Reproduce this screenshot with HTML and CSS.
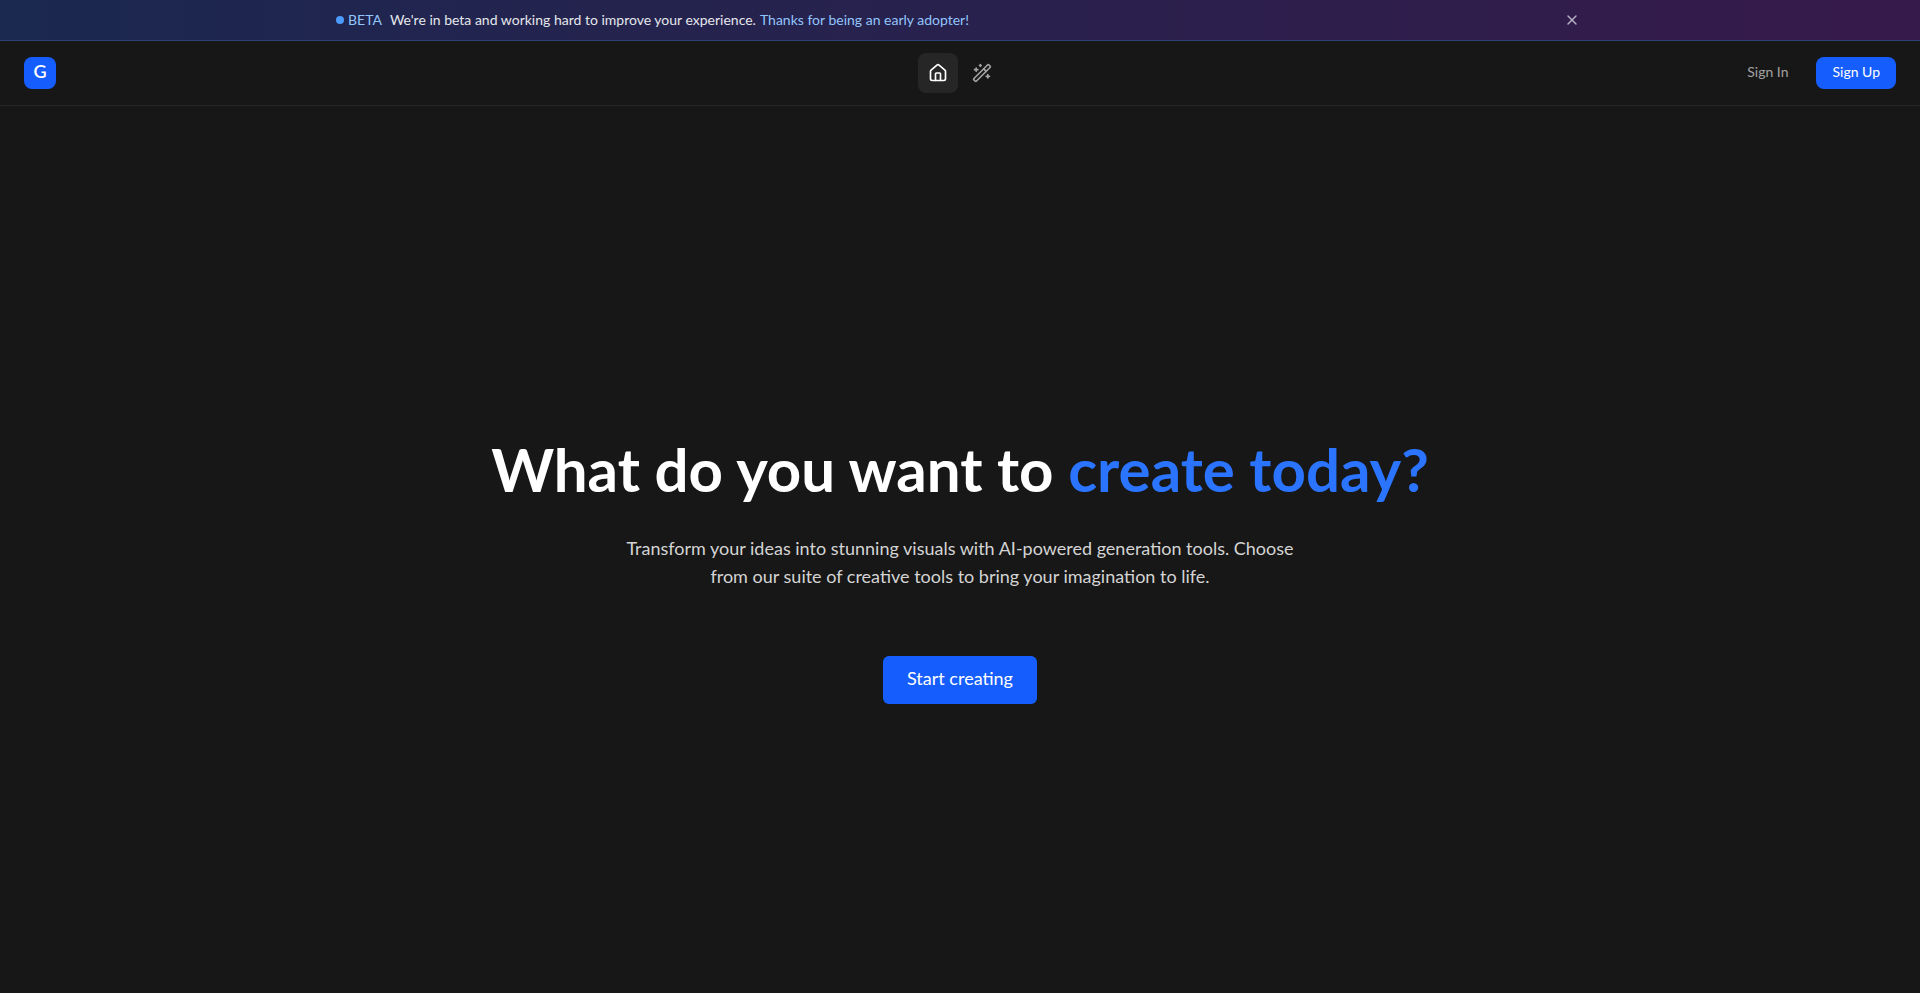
FILE: index.html
```html
<!DOCTYPE html>
<html lang="en">
<head>
	<meta charset="UTF-8">
	<title>Create today</title>
	<link rel="stylesheet" href="styles.css">
</head>
<body>
	<div class="banner">
		<div class="bannerInner">
			<div class="bannerText">
				<span class="dot"></span>
				<span class="beta">BETA</span>
				<span class="msg">We're in beta and working hard to improve your experience.</span>
				<span class="thanks">Thanks for being an early adopter!</span>
			</div>
			<button class="close" type="button" aria-label="Close">
				<svg width="16" height="16" viewBox="0 0 24 24" fill="none" stroke="currentColor" stroke-width="2" stroke-linecap="round"><path d="M18 6 6 18"/><path d="m6 6 12 12"/></svg>
			</button>
		</div>
	</div>
	<nav class="nav">
		<div class="navLeft"><a class="logo" href="#">G</a></div>
		<div class="navMid">
			<a class="navIcon active" href="#">
				<svg width="20" height="20" viewBox="0 0 24 24" fill="none" stroke="currentColor" stroke-width="2" stroke-linecap="round" stroke-linejoin="round"><path d="M15 21v-8a1 1 0 0 0-1-1h-4a1 1 0 0 0-1 1v8"/><path d="M3 10a2 2 0 0 1 .709-1.528l7-5.999a2 2 0 0 1 2.582 0l7 5.999A2 2 0 0 1 21 10v9a2 2 0 0 1-2 2H5a2 2 0 0 1-2-2z"/></svg>
			</a>
			<a class="navIcon" href="#">
				<svg width="20" height="20" viewBox="0 0 24 24" fill="none" stroke="currentColor" stroke-width="2" stroke-linecap="round" stroke-linejoin="round"><path d="m21.64 3.64-1.28-1.28a1.21 1.21 0 0 0-1.72 0L2.36 18.64a1.21 1.21 0 0 0 0 1.72l1.28 1.28a1.2 1.2 0 0 0 1.72 0L21.64 5.36a1.2 1.2 0 0 0 0-1.72"/><path d="m14 7 3 3"/><path d="M5 6v4"/><path d="M19 14v4"/><path d="M10 2v2"/><path d="M7 8H3"/><path d="M21 16h-4"/><path d="M11 3H9"/></svg>
			</a>
		</div>
		<div class="navRight">
			<a class="signIn" href="#">Sign In</a>
			<a class="signUp" href="#">Sign Up</a>
		</div>
	</nav>
	<main class="hero">
		<h1>What do you want to <span class="blue">create today?</span></h1>
		<p>Transform your ideas into <span class="plain">stunning</span> visuals with AI-powered generation tools. Choose from our suite of creative tools to bring your imagination to life.</p>
		<a class="start" href="#">Start creating</a>
	</main>
</body>
</html>
```

FILE: styles.css
```css
*{
	box-sizing:border-box;
}
html,body{
	height:100%;
}
body{
	margin:0;
	display:flex;
	flex-direction:column;
	background-color:#171717;
	color:#fff;
	font-family:"Lato","Liberation Sans",sans-serif;
	font-variant-ligatures:common-ligatures discretionary-ligatures;
	text-rendering:optimizeLegibility;
}
a{
	text-decoration:none;
}
.banner{
	height:41px;
	flex:none;
	background:linear-gradient(90deg,#1b2850,#361a4b);
	border-bottom:1px solid #2f4177;
}
.bannerInner{
	width:1280px;
	height:40px;
	margin:0 auto;
	padding:0 20px 0 16px;
	display:flex;
	align-items:center;
	justify-content:space-between;
}
.bannerText{
	display:flex;
	align-items:center;
	font-size:14px;
	line-height:20px;
}
.dot{
	width:8px;
	height:8px;
	border-radius:50%;
	background-color:#4d9bff;
	margin-right:4px;
}
.beta{
	color:#93c5fd;
	margin-right:8px;
}
.msg{
	color:#e5e7eb;
	margin-right:4px;
}
.thanks{
	color:#93c5fd;
}
.close{
	display:flex;
	padding:0;
	border:0;
	background:none;
	color:#b9b3c4;
}
.nav{
	height:65px;
	flex:none;
	padding:0 24px;
	display:grid;
	grid-template-columns:1fr auto 1fr;
	align-items:center;
	border-bottom:1px solid #262626;
}
.logo{
	width:32px;
	height:32px;
	padding-bottom:5px;
	display:flex;
	align-items:center;
	justify-content:center;
	border-radius:8px;
	background-color:#155dfc;
	color:#fff;
	font-size:18px;
	font-weight:600;
}
.navMid{
	display:flex;
	gap:4px;
}
.navIcon{
	width:40px;
	height:40px;
	display:flex;
	align-items:center;
	justify-content:center;
	border-radius:8px;
	color:#a3a3a3;
}
.navIcon.active{
	background-color:#262626;
	color:#fff;
}
.navRight{
	display:flex;
	align-items:center;
	justify-content:flex-end;
	gap:12px;
	font-size:14px;
}
.signIn{
	padding:0 16px;
	height:32px;
	line-height:30px;
	color:#a3a3a3;
}
.signUp{
	padding:0 16px;
	height:32px;
	line-height:30px;
	border-radius:8px;
	background-color:#155dfc;
	color:#fff;
}
.hero{
	flex:1;
	padding-top:44px;
	display:flex;
	flex-direction:column;
	align-items:center;
	justify-content:center;
	text-align:center;
}
.hero h1{
	margin:0 0 35px 0;
	font-size:60px;
	line-height:60px;
	font-weight:700;
}
.blue{
	color:#2a74ff;
}
.hero p{
	width:672px;
	margin:0 0 66px 0;
	font-size:18px;
	line-height:28px;
	color:#d4d4d4;
}
.plain{
	display:inline-block;
	font-variant-ligatures:common-ligatures;
}
.start{
	padding:0 24px;
	height:48px;
	line-height:44px;
	border-radius:6px;
	background-color:#155dfc;
	color:#fff;
	font-size:18px;
}
```
